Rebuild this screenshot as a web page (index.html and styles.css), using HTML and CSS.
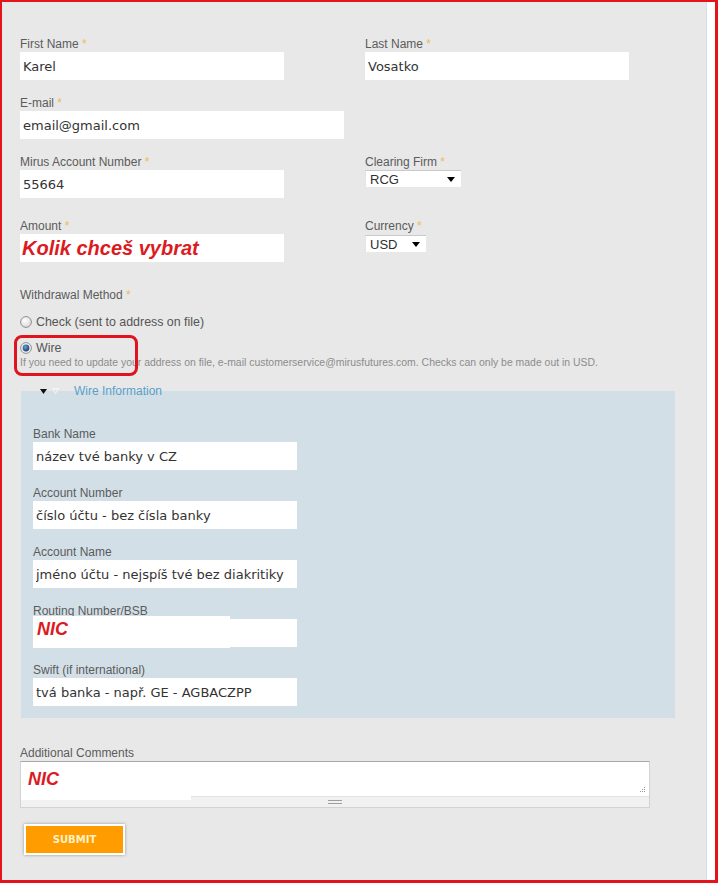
FILE: index.html
```html
<!DOCTYPE html>
<html>
<head>
<meta charset="utf-8">
<link rel="stylesheet" href="styles.css">
</head>
<body>
<div class="frame">
  <div class="page">
    <form class="form">
      <div class="row r1">
        <div class="field">
          <label class="lbl">First Name <span class="req">*</span></label>
          <input class="input" type="text" value="Karel">
        </div>
        <div class="field">
          <label class="lbl">Last Name <span class="req">*</span></label>
          <input class="input" type="text" value="Vosatko">
        </div>
      </div>
      <div class="row r2">
        <div class="field">
          <label class="lbl">E-mail <span class="req">*</span></label>
          <input class="input wide" type="text" value="email@gmail.com">
        </div>
      </div>
      <div class="row r3">
        <div class="field">
          <label class="lbl">Mirus Account Number <span class="req">*</span></label>
          <input class="input" type="text" value="55664">
        </div>
        <div class="field">
          <label class="lbl">Clearing Firm <span class="req">*</span></label>
          <div class="select firm"><span>RCG</span><svg class="arrow" width="8" height="5" viewBox="0 0 8 5"><polygon points="0,0 8,0 4,5" fill="#000"/></svg></div>
        </div>
      </div>
      <div class="row r4">
        <div class="field">
          <label class="lbl">Amount <span class="req">*</span></label>
          <input class="input hint" type="text" value="Kolik chceš vybrat">
        </div>
        <div class="field">
          <label class="lbl">Currency <span class="req">*</span></label>
          <div class="select cur"><span>USD</span><svg class="arrow" width="8" height="5" viewBox="0 0 8 5"><polygon points="0,0 8,0 4,5" fill="#000"/></svg></div>
        </div>
      </div>

      <label class="lbl">Withdrawal Method <span class="req">*</span></label>
      <div class="radios">
        <div class="radio-row">
          <svg width="12" height="12" viewBox="0 0 12 12"><defs><radialGradient id="g1" cx="0.4" cy="0.35" r="0.7"><stop offset="0" stop-color="#ffffff"/><stop offset="1" stop-color="#d6d6d6"/></radialGradient></defs><circle cx="6" cy="6" r="5.4" fill="url(#g1)" stroke="#8f8f8f" stroke-width="1"/></svg>
          <span>Check (sent to address on file)</span>
        </div>
        <div class="radio-row wire">
          <svg width="12" height="12" viewBox="0 0 12 12"><defs><radialGradient id="g2" cx="0.4" cy="0.35" r="0.7"><stop offset="0" stop-color="#6d9fd0"/><stop offset="1" stop-color="#123d6c"/></radialGradient></defs><circle cx="6" cy="6" r="5.4" fill="#f2f2f2" stroke="#8f8f8f" stroke-width="1"/><circle cx="6" cy="6" r="3.4" fill="url(#g2)"/></svg>
          <span>Wire</span>
        </div>
        <p class="help">If you need to update your address on file, e-mail customerservice@mirusfutures.com. Checks can only be made out in USD.</p>
        <div class="mark"></div>
      </div>

      <div class="panel">
        <div class="legend">
          <svg width="7" height="5" viewBox="0 0 7 5"><polygon points="0,0 7,0 3.5,5" fill="#111"/></svg>
          <svg class="open" width="7" height="6" viewBox="0 0 7 6"><polygon points="0.5,0.5 6.5,0.5 3.5,5.5" fill="none" stroke="#f6f8fa" stroke-width="1"/></svg>
          <span class="legend-text">Wire Information</span>
        </div>
        <div class="pfield">
          <label class="lbl">Bank Name</label>
          <input class="input" type="text" value="název tvé banky v CZ">
        </div>
        <div class="pfield">
          <label class="lbl">Account Number</label>
          <input class="input" type="text" value="číslo účtu - bez čísla banky">
        </div>
        <div class="pfield">
          <label class="lbl">Account Name</label>
          <input class="input" type="text" value="jméno účtu - nejspíš tvé bez diakritiky">
        </div>
        <div class="pfield">
          <label class="lbl">Routing Number/BSB</label>
          <div class="input boxed">
            <div class="patch">NIC</div>
          </div>
        </div>
        <div class="pfield last">
          <label class="lbl">Swift (if international)</label>
          <input class="input" type="text" value="tvá banka - např. GE - AGBACZPP">
        </div>
      </div>

      <label class="lbl comments-lbl">Additional Comments</label>
      <div class="ta">
        <div class="ta-body">
          <svg class="dots" width="6" height="6" viewBox="0 0 6 6"><g fill="#9a9a9a"><rect x="4" y="0" width="1" height="1"/><rect x="2" y="2" width="1" height="1"/><rect x="4" y="2" width="1" height="1"/><rect x="0" y="4" width="1" height="1"/><rect x="2" y="4" width="1" height="1"/><rect x="4" y="4" width="1" height="1"/></g></svg>
        </div>
        <div class="ta-grip"><span class="grip"></span></div>
        <div class="ta-patch">NIC</div>
      </div>

      <button class="btn" type="button">SUBMIT</button>
    </form>
  </div>
  <div class="edge"></div>
</div>
</body>
</html>
```
FILE: styles.css
```css
html, body {
  margin: 0;
  padding: 0;
  background: #ffffff;
}

.frame {
  width: 718px;
  height: 883px;
  box-sizing: border-box;
  border: 2px solid #e3141c;
  border-right-width: 3px;
  border-bottom-width: 3px;
  display: flex;
}

.page {
  flex: 1;
  background: #e8e8e8;
  padding: 34px 0 0 18px;
  box-sizing: border-box;
  font-family: "Liberation Sans", Arial, sans-serif;
}

.edge {
  width: 8px;
  background: #ffffff;
  border-left: 1px solid #d4dee9;
}

.form {
  margin: 0;
}

.row {
  display: grid;
  grid-template-columns: 345px 1fr;
  align-items: start;
}

.r1, .r2 { margin-bottom: 15px; }
.r3 { margin-bottom: 20px; }
.r4 { margin-bottom: 25px; }

.lbl {
  display: block;
  font-size: 12px;
  line-height: 16px;
  color: #5b5b5b;
}

.req {
  color: #f2b85c;
}

.input {
  display: block;
  width: 264px;
  height: 28px;
  box-sizing: border-box;
  border: none;
  outline: none;
  margin: 0;
  padding: 0 3px;
  background: #ffffff;
  font-family: "DejaVu Sans", Verdana, sans-serif;
  font-size: 13px;
  color: #333333;
}

.input.wide {
  width: 324px;
}

.input.hint {
  padding-left: 2px;
  font-family: "Liberation Sans", Arial, sans-serif;
  font-size: 20px;
  font-weight: bold;
  font-style: italic;
  color: #dc1a22;
}

.select {
  display: flex;
  align-items: center;
  justify-content: space-between;
  height: 17px;
  box-sizing: border-box;
  background: #ffffff;
  border-top: 1px solid #c9c9c9;
  border-left: 1px solid #e4e4e4;
  padding: 0 6px 0 4px;
  font-size: 13px;
  color: #2f2f2f;
}

.select.firm { width: 96px; }
.select.cur { width: 61px; margin-top: 1px; }

.radios {
  position: relative;
  margin-top: 11px;
}

.radio-row {
  display: flex;
  align-items: center;
  gap: 4px;
  height: 16px;
  font-size: 12.4px;
  color: #555555;
}

.radio-row.wire {
  margin-top: 10px;
}

.help {
  margin: 0;
  font-size: 10.45px;
  line-height: 13px;
  color: #8c8c8c;
}

.mark {
  position: absolute;
  left: -6px;
  top: 21px;
  width: 124px;
  height: 41px;
  box-sizing: border-box;
  border: 3px solid #e0141e;
  border-radius: 8px;
}

.panel {
  display: flow-root;
  margin: 22px 0 0 1px;
  width: 654px;
  box-sizing: border-box;
  background: #d3dfe7;
  padding: 0 12px 12px;
}

.legend {
  display: flex;
  align-items: center;
  height: 14px;
  margin: -7px 0 28px 7px;
}

.legend .open {
  margin-left: 5px;
}

.legend-text {
  margin-left: 15px;
  font-size: 12px;
  color: #5a9fc8;
}

.pfield {
  margin-bottom: 15px;
}

.pfield.last {
  margin-bottom: 0;
}

.input.boxed {
  position: relative;
}

.patch {
  position: absolute;
  left: 0;
  top: -3px;
  width: 197px;
  height: 32px;
  background: #ffffff;
  box-sizing: border-box;
  padding: 3px 0 0 4px;
  font-family: "Liberation Sans", Arial, sans-serif;
  font-size: 18px;
  line-height: 20px;
  font-weight: bold;
  font-style: italic;
  color: #dc1a22;
}

.comments-lbl {
  margin-top: 27px;
}

.ta {
  position: relative;
  width: 630px;
  height: 47px;
  box-sizing: border-box;
  border: 1px solid #d2d2d2;
  border-top-color: #a8a8a8;
  background: #ffffff;
  display: flex;
  flex-direction: column;
}

.ta-body {
  flex: 1;
  position: relative;
}

.dots {
  position: absolute;
  right: 3px;
  bottom: 3px;
}

.ta-grip {
  height: 10px;
  background: #f1f1f1;
  border-top: 1px solid #e2e2e2;
  display: flex;
  justify-content: center;
  align-items: center;
}

.grip {
  width: 14px;
  height: 2px;
  border-top: 1px solid #9d9d9d;
  border-bottom: 1px solid #9d9d9d;
}

.ta-patch {
  position: absolute;
  left: 0;
  top: 0;
  width: 170px;
  height: 38px;
  background: #ffffff;
  box-sizing: border-box;
  padding: 7px 0 0 7px;
  font-size: 18px;
  line-height: 20px;
  font-weight: bold;
  font-style: italic;
  color: #dc1a22;
}

.btn {
  display: block;
  margin: 16px 0 0 4px;
  width: 101px;
  height: 31px;
  box-sizing: border-box;
  border: 2px solid #ffffff;
  background: #ff9d00;
  box-shadow: 0 0 3px rgba(0, 0, 0, 0.35);
  padding: 0;
  color: #fff2c6;
  font-family: "DejaVu Sans", Verdana, sans-serif;
  font-size: 10px;
  font-weight: bold;
  cursor: pointer;
}
```
